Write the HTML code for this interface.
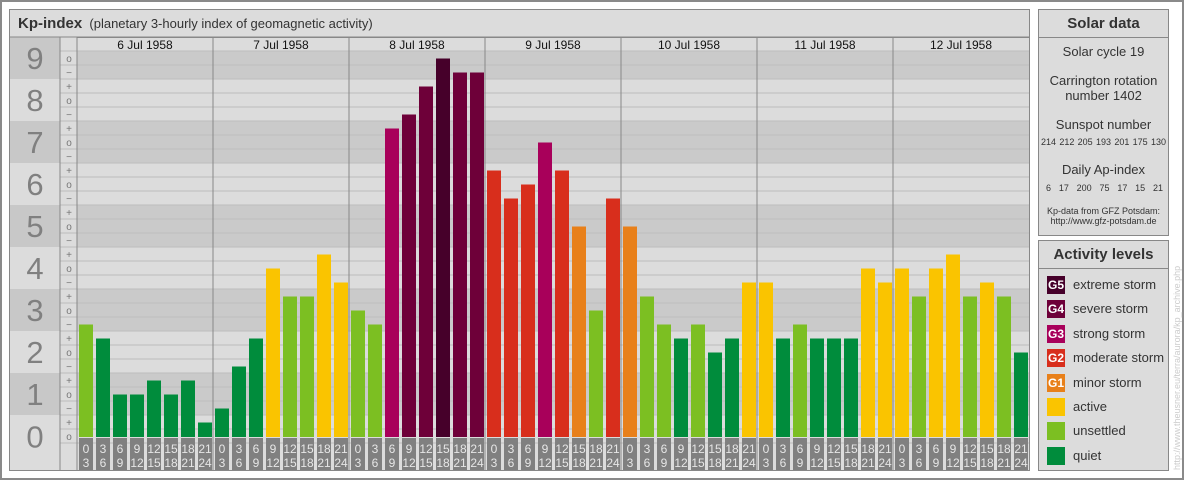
<!DOCTYPE html>
<html><head><meta charset="utf-8"><style>
body{margin:0;width:1184px;height:480px;background:#fff;font-family:"Liberation Sans",sans-serif;overflow:hidden}
#f{position:absolute;left:0;top:0;width:1180px;height:476px;border:2px solid #8a8a8a}
.p{position:absolute;background:#dcdcdc;border:1px solid #888;box-sizing:border-box;color:#333}
.h{height:28px;border-bottom:1px solid #888;box-sizing:border-box;font-weight:bold;font-size:15px;text-align:center;line-height:27px}
.c{text-align:center;font-size:13px;line-height:15px}
.n{display:flex;justify-content:space-between;font-size:9px;line-height:11px;margin-top:5px}
.lg{position:absolute;left:8px;font-size:13px;height:18px;line-height:18px}
.lg b{display:inline-block;width:18px;height:18px;color:#fff;font-size:12px;text-align:center;margin-right:8px;vertical-align:top}
</style></head><body>
<div id="f"></div>
<div class="p" style="left:9px;top:9px;width:1021px;height:462px">
<div style="height:28px;border-bottom:1px solid #888;box-sizing:border-box;line-height:27px;padding-left:8px;font-size:13px"><b style="font-size:15px">Kp-index</b>&nbsp;&nbsp;(planetary 3-hourly index of geomagnetic activity)</div>
</div>
<svg id="s" width="1184" height="480" style="position:absolute;left:0;top:0" font-family="Liberation Sans, sans-serif"></svg>
<div class="p" style="left:1038px;top:9px;width:131px;height:227px">
<div class="h">Solar data</div>
<div class="c" style="margin-top:6px">Solar cycle 19</div>
<div class="c" style="margin-top:14px">Carrington rotation<br>number 1402</div>
<div class="c" style="margin-top:14px">Sunspot number</div>
<div class="n" style="padding:0 2px"><span>214</span><span>212</span><span>205</span><span>193</span><span>201</span><span>175</span><span>130</span></div>
<div class="c" style="margin-top:14px">Daily Ap-index</div>
<div class="n" style="padding:0 5px 0 7px;margin-top:6px"><span>6</span><span>17</span><span>200</span><span>75</span><span>17</span><span>15</span><span>21</span></div>
<div class="c" style="font-size:9px;line-height:10px;margin-top:12px">Kp-data from GFZ Potsdam:<br>http://www.gfz-potsdam.de</div>
</div>
<div class="p" style="left:1038px;top:240px;width:131px;height:231px">
<div class="h">Activity levels</div>
<div class="lg" style="top:35px"><b style="background:#46002a">G5</b>extreme storm</div>
<div class="lg" style="top:59px"><b style="background:#6e0039">G4</b>severe storm</div>
<div class="lg" style="top:84px"><b style="background:#a8005a">G3</b>strong storm</div>
<div class="lg" style="top:108px"><b style="background:#d82e1c">G2</b>moderate storm</div>
<div class="lg" style="top:133px"><b style="background:#e8801a">G1</b>minor storm</div>
<div class="lg" style="top:157px"><b style="background:#fac400"></b>active</div>
<div class="lg" style="top:181px"><b style="background:#7cbf22"></b>unsettled</div>
<div class="lg" style="top:206px"><b style="background:#008c3c"></b>quiet</div>
</div>
<div style="position:absolute;left:1172px;top:470px;transform-origin:0 0;transform:rotate(-90deg);font-size:9px;color:#ccc;white-space:nowrap;width:230px">http://www.theusner.eu/terra/aurora/kp_archive.php</div>
<script>
(function(){
var s=document.getElementById('s'),h='';
function r(x,y,w,hh,c){h+='<rect x="'+x+'" y="'+y+'" width="'+w+'" height="'+hh+'" fill="'+c+'"/>';}
function t(x,y,txt,sz,c){h+='<text x="'+x+'" y="'+y+'" font-size="'+sz+'" fill="'+c+'" text-anchor="middle">'+txt+'</text>';}
for(var n=9;n>=0;n--){var tp=n==9?37:79+(8-n)*42,bt=n==0?470:79+(9-n)*42;
var dark=(n%2==1);r(10,tp,50,bt-tp,dark?'#c8c8c8':'#dcdcdc');
var ct=n==9?51:tp,cb=n==0?443:bt;r(77,ct,952,cb-ct,dark?'#cacaca':'#dcdcdc');
var mid=(tp+(n==9?79:n==0?458:bt))/2;t(35,mid+11,n,31,'#808080');}
r(60,37,17,433,'#dcdcdc');
for(var i=0;i<=28;i++){var y=51+i*14;h+='<line x1="60" x2="1029" y1="'+y+'" y2="'+y+'" stroke="#bdbdbd" stroke-width="1"/>';}
for(var k=27;k>=0;k--){var y=51+(27-k)*14+7;var m=k%3;t(69,y+4,m==0?'o':(m==1?'+':'\u2212'),10,'#777');}
h+='<line x1="10" x2="1029" y1="37" y2="37" stroke="#888"/>';
var V=[8,7,3,3,4,3,4,1, 2,5,7,12,10,10,13,11, 9,8,22,23,25,27,26,26, 19,17,18,21,19,15,9,17, 15,10,8,7,8,6,7,11, 11,7,8,7,7,7,12,11, 12,10,12,13,10,11,10,6];
function col(v){if(v>=27)return'#46002a';if(v>=23)return'#6e0039';if(v>=20)return'#a8005a';if(v>=17)return'#d82e1c';if(v>=14)return'#e8801a';if(v>=11)return'#fac400';if(v>=8)return'#7cbf22';return'#008c3c';}
var days=['6 Jul 1958','7 Jul 1958','8 Jul 1958','9 Jul 1958','10 Jul 1958','11 Jul 1958','12 Jul 1958'];
for(var d=0;d<7;d++){t(77+d*136+68,49,days[d],12,'#111');
for(var j=0;j<8;j++){var x=77+d*136+j*17+2,v=V[d*8+j],y=436.5-v*14;r(x,y,14,437-y,col(v));
r(x,438,14,32,'#808080');t(x+7,453,j*3,12,'#e6e6e6');t(x+7,467,j*3+3,12,'#e6e6e6');}}
h+='<line x1="60" x2="60" y1="37" y2="470" stroke="#888"/><line x1="77" x2="77" y1="37" y2="470" stroke="#888"/>';
for(var d=1;d<7;d++){var x=77+d*136;h+='<line x1="'+x+'" x2="'+x+'" y1="37" y2="470" stroke="#888"/>';}
s.innerHTML=h;
})();
</script>
</body></html>
